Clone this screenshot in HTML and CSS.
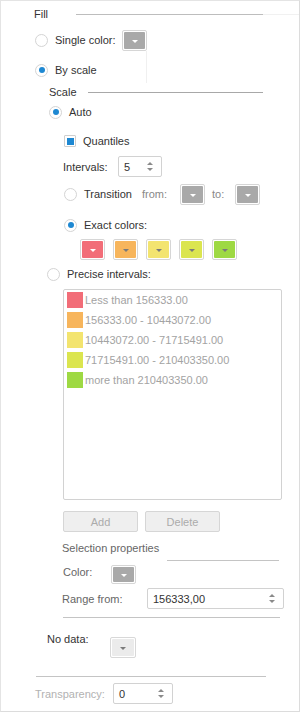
FILE: index.html
```html
<!DOCTYPE html>
<html lang="en">
<head>
  <meta charset="UTF-8" />
  <title>Fill settings</title>
  <link rel="stylesheet" href="styles.css">
</head>
<body>
  <div class="panel">
    <div class="head head-fill">
      <span class="head-label">Fill</span>
      <span class="head-line"></span>
      <span class="head-fade"></span>
    </div>

    <div class="row row-single">
      <span class="radio"></span>
      <span class="label w-single">Single color:</span>
      <span class="color-btn gray has-shadow"><span class="fill"><i class="arrow light"></i></span></span>
    </div>

    <div class="row row-byscale">
      <span class="radio on"></span>
      <span class="label">By scale</span>
    </div>

    <div class="head head-scale">
      <span class="head-label">Scale</span>
      <span class="head-line"></span>
    </div>

    <div class="row row-auto">
      <span class="radio on"></span>
      <span class="label">Auto</span>
    </div>

    <div class="row row-quant">
      <span class="check on"></span>
      <span class="label">Quantiles</span>
    </div>

    <div class="row row-intervals">
      <span class="label w-intervals">Intervals:</span>
      <div class="spin spin-small">
        <span class="spin-value">5</span>
        <span class="spin-arrows"><i class="up"></i><i class="down"></i></span>
      </div>
    </div>

    <div class="row row-transition">
      <span class="radio"></span>
      <span class="label w-transition">Transition</span>
      <span class="label muted w-from">from:</span>
      <span class="color-btn gray"><span class="fill"><i class="arrow light"></i></span></span>
      <span class="label muted w-to">to:</span>
      <span class="color-btn gray"><span class="fill"><i class="arrow light"></i></span></span>
    </div>

    <div class="row row-exact">
      <span class="radio on"></span>
      <span class="label">Exact colors:</span>
    </div>

    <div class="row row-swatches">
      <span class="color-btn c-red"><span class="fill"><i class="arrow light"></i></span></span>
      <span class="color-btn c-orange"><span class="fill"><i class="arrow"></i></span></span>
      <span class="color-btn c-yellow"><span class="fill"><i class="arrow"></i></span></span>
      <span class="color-btn c-lime"><span class="fill"><i class="arrow"></i></span></span>
      <span class="color-btn c-green"><span class="fill"><i class="arrow"></i></span></span>
    </div>

    <div class="row row-precise">
      <span class="radio"></span>
      <span class="label">Precise intervals:</span>
    </div>

    <div class="list">
      <div class="list-item"><span class="sw c-red"></span>Less than 156333.00</div>
      <div class="list-item"><span class="sw c-orange"></span>156333.00 - 10443072.00</div>
      <div class="list-item"><span class="sw c-yellow"></span>10443072.00 - 71715491.00</div>
      <div class="list-item"><span class="sw c-lime"></span>71715491.00 - 210403350.00</div>
      <div class="list-item"><span class="sw c-green"></span>more than 210403350.00</div>
    </div>

    <div class="row row-buttons">
      <button class="btn" disabled>Add</button>
      <button class="btn" disabled>Delete</button>
    </div>

    <div class="row row-selprops">
      <span class="label sub w-selprops">Selection properties</span>
      <span class="sub-line"></span>
    </div>

    <div class="row row-color">
      <span class="label sub w-color">Color:</span>
      <span class="color-btn gray short"><span class="fill"><i class="arrow light"></i></span></span>
    </div>

    <div class="row row-range">
      <span class="label sub w-range">Range from:</span>
      <div class="spin spin-wide">
        <span class="spin-value">156333,00</span>
        <span class="spin-arrows"><i class="up"></i><i class="down"></i></span>
      </div>
    </div>

    <div class="rule rule-sel"></div>

    <div class="row row-nodata">
      <span class="label w-nodata">No data:</span>
      <span class="color-btn empty"><span class="fill"><i class="arrow"></i></span></span>
    </div>

    <div class="rule rule-bottom"></div>

    <div class="row row-transp">
      <span class="label faint w-transp">Transparency:</span>
      <div class="spin spin-transp">
        <span class="spin-value">0</span>
        <span class="spin-arrows"><i class="up"></i><i class="down"></i></span>
      </div>
    </div>
  </div>
</body>
</html>
```

FILE: styles.css
```css
:root {
  --text: #333;
  --muted: #888;
  --blue: #1e88d2;
  --border: #d2d2d2;
}

body {
  margin: 0;
  font-family: 'Liberation Sans', Arial, sans-serif;
  font-size: 11px;
  color: var(--text);
  background: #fff;
}

.panel {
  position: relative;
  box-sizing: border-box;
  width: 300px;
  height: 712px;
  border: 1px solid #dcdcdc;
  border-left-color: #e4e4e4;
  border-top-color: #e4e4e4;
}

/* section headers */
.head {
  display: flex;
  align-items: center;
  height: 18px;
}

.head-line {
  height: 1px;
  background: #bdbdbd;
}

.head-fade {
  flex: 1;
  height: 1px;
  background: #f1f1f1;
}

.head-fill {
  margin-top: 4px;
  padding-left: 33px;
}
.head-fill .head-label { width: 42px; }
.head-fill .head-line { width: 187px; }

.head-scale {
  margin-top: 3px;
  padding-left: 48px;
}
.head-scale .head-label { width: 39px; }
.head-scale .head-line { width: 175px; background: #a8a8a8; }

/* rows */
.row {
  display: flex;
  align-items: center;
  white-space: nowrap;
}

.label { line-height: 14px; }
.muted { color: var(--muted); }
.sub { color: #666; }
.faint { color: #b2b2b2; }

.row-single { margin-top: 6px; height: 22px; padding-left: 34px; }
.row-byscale { margin-top: 9px; height: 20px; padding-left: 34px; }
.row-auto { margin-top: 1px; height: 20px; padding-left: 48px; }
.row-quant { margin-top: 9px; height: 20px; padding-left: 63px; }
.row-intervals { margin-top: 5px; height: 21px; padding-left: 62px; }
.row-transition { margin-top: 6px; height: 22px; padding-left: 63px; }
.row-exact { margin-top: 10px; height: 20px; padding-left: 63px; }
.row-swatches { margin-top: 4px; height: 21px; padding-left: 79px; gap: 8px; }
.row-precise { margin-top: 4px; height: 20px; padding-left: 46px; }

.w-single { width: 67px; }
.w-intervals { width: 55px; }
.w-transition { width: 58px; }
.w-from { width: 38px; }
.w-to { width: 23px; margin-left: 7px; }

/* radios and checkbox */
.radio {
  box-sizing: border-box;
  flex: 0 0 13px;
  width: 13px;
  height: 13px;
  margin-right: 7px;
  border: 1px solid #d4d4d4;
  border-radius: 50%;
  background: #fff;
  display: flex;
  align-items: center;
  justify-content: center;
}

.radio.on::after {
  content: "";
  width: 6px;
  height: 6px;
  border-radius: 50%;
  background: var(--blue);
}

.check {
  box-sizing: border-box;
  flex: 0 0 12px;
  width: 12px;
  height: 12px;
  margin-right: 7px;
  border: 1px solid #cfcfcf;
  border-radius: 1px;
  display: flex;
  align-items: center;
  justify-content: center;
}

.check.on::after {
  content: "";
  width: 7px;
  height: 7px;
  background: var(--blue);
}

/* color pickers */
.color-btn {
  box-sizing: border-box;
  display: flex;
  width: 25px;
  height: 21px;
  padding: 1px;
  border: 1px solid #d6d6d6;
  border-radius: 2px;
  background: #fff;
}

.color-btn .fill {
  flex: 1;
  display: flex;
  align-items: center;
  justify-content: center;
  border-radius: 1px;
}

.color-btn.short { height: 19px; }

.arrow {
  width: 0;
  height: 0;
  margin-top: 2px;
  border-left: 3px solid transparent;
  border-right: 3px solid transparent;
  border-top: 3px solid #7a7a7a;
}

.arrow.light { border-top-color: #fff; }

.gray .fill { background: #a9a9a9; }
.empty { width: 26px; border-color: #d8d8d8; }
.empty .fill { background: #ebebeb; }

.c-red, .c-red .fill { background: #f26d78; }
.c-orange, .c-orange .fill { background: #f7b55c; }
.c-yellow, .c-yellow .fill { background: #f3e46f; }
.c-lime, .c-lime .fill { background: #dbe54f; }
.c-green, .c-green .fill { background: #9ed943; }
.color-btn.c-red, .color-btn.c-orange, .color-btn.c-yellow,
.color-btn.c-lime, .color-btn.c-green { background: #fff; }

.has-shadow::after {
  content: "";
  position: absolute;
  left: 145px;
  top: 50px;
  width: 1px;
  height: 32px;
  background: #f0f0f0;
}

/* spin boxes */
.spin {
  box-sizing: border-box;
  display: flex;
  align-items: center;
  height: 21px;
  padding-left: 5px;
  border: 1px solid var(--border);
  border-radius: 2px;
}

.spin-value { flex: 1; color: var(--text); }

.spin-arrows {
  display: flex;
  flex-direction: column;
  gap: 3px;
  margin-right: 8px;
}

.spin-arrows i {
  width: 0;
  height: 0;
  border-left: 3px solid transparent;
  border-right: 3px solid transparent;
}

.spin-arrows .up { border-bottom: 3px solid #8a8a8a; }
.spin-arrows .down { border-top: 3px solid #8a8a8a; }

.spin-small { width: 44px; }
.spin-wide { width: 137px; }
.spin-transp { width: 60px; }

/* intervals list */
.list {
  box-sizing: border-box;
  margin: 5px 0 0 62px;
  width: 219px;
  height: 211px;
  border: 1px solid var(--border);
  border-radius: 2px;
  padding: 0 3px;
  color: #a3a3a3;
}

.list-item {
  display: flex;
  align-items: center;
  height: 20px;
  white-space: nowrap;
}

.sw {
  flex: 0 0 16px;
  height: 16px;
  margin-right: 2px;
}

/* buttons */
.row-buttons { margin-top: 11px; height: 21px; padding-left: 62px; gap: 7px; }

.btn {
  box-sizing: border-box;
  width: 75px;
  height: 21px;
  padding: 0;
  border: 1px solid #d6d6d6;
  border-radius: 2px;
  background: #efefef;
  color: #ababab;
  font: inherit;
}

/* selection properties */
.row-selprops {
  margin-top: 8px;
  height: 21px;
  padding-left: 61px;
  align-items: flex-start;
}
.row-selprops .label { line-height: 16px; }
.w-selprops { width: 105px; }

.sub-line {
  width: 112px;
  height: 1px;
  margin-top: 20px;
  background: #c4c4c4;
}

.row-color {
  margin-top: 4px;
  height: 19px;
  padding-left: 62px;
  align-items: flex-start;
}
.w-color { width: 48px; }

.row-range { margin-top: 4px; height: 21px; padding-left: 61px; }
.w-range { width: 85px; }

.rule {
  height: 1px;
  background: #c4c4c4;
}

.rule-sel { margin: 8px 0 0 62px; width: 217px; }

.row-nodata {
  margin-top: 14px;
  height: 26px;
  padding-left: 46px;
  align-items: flex-start;
}
.w-nodata { width: 63px; }
.row-nodata .color-btn { margin-top: 5px; }

.rule-bottom { margin: 18px 0 0 35px; width: 230px; }

.row-transp { margin-top: 6px; height: 21px; padding-left: 34px; }
.w-transp { width: 78px; }
```
